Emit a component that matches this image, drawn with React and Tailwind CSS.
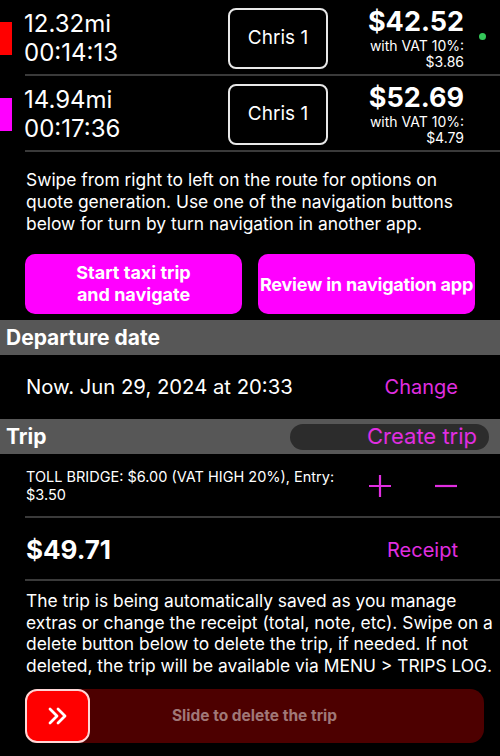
import React from 'react';

const routes = [
  { color: 'bg-[#ff0000]', dist: '12.32mi', time: '00:14:13', driver: 'Chris 1', price: '$42.52', vat: '$3.86', active: true },
  { color: 'bg-[#ff00ff]', dist: '14.94mi', time: '00:17:36', driver: 'Chris 1', price: '$52.69', vat: '$4.79', active: false },
];

function RouteRow({ route }) {
  return (
    <div className="relative flex h-[76px] items-center">
      <div className={`w-3 h-[33px] ${route.color}`} />
      <div className="ml-3 flex flex-col text-[24px] leading-[29px] text-white">
        <span>{route.dist}</span>
        <span>{route.time}</span>
      </div>
      <button className="ml-auto mr-0 w-[100px] h-[61px] rounded-lg border-2 border-[#e8e8e8] text-[19px] text-white">
        {route.driver}
      </button>
      <div className="w-[136px] flex flex-col items-end text-white">
        <span className="text-[27px] font-bold leading-[32px]">{route.price}</span>
        <span className="text-[14px] leading-[16px]">with VAT 10%:</span>
        <span className="text-[14px] leading-[16px]">{route.vat}</span>
      </div>
      <div className="w-9 flex justify-center">
        {route.active && <div className="w-[7px] h-[7px] rounded-full bg-[#34c759] -mt-1" />}
      </div>
      <div className="absolute bottom-0 left-[25px] right-0 h-[2px] bg-[#3a3a3a]" />
    </div>
  );
}

function App() {
  return (
    <div className="w-[500px] h-[756px] overflow-hidden bg-black text-white" style={{ fontFamily: 'Inter, "Liberation Sans", sans-serif' }}>
      {routes.map((r, i) => (
        <RouteRow key={i} route={r} />
      ))}

      <p className="pl-[26px] pr-[26px] pt-[17px] text-[17.4px] leading-[22px]">
        Swipe from right to left on the route for options on quote generation. Use one of the navigation buttons below for turn by turn navigation in another app.
      </p>

      <div className="flex gap-4 px-[25px] pt-[19px]">
        <button className="flex-1 h-[60px] rounded-[10px] bg-[#ff00ff] text-[18px] font-bold leading-[22px] text-white">
          Start taxi trip<br />and navigate
        </button>
        <button className="flex-1 h-[60px] rounded-[10px] bg-[#ff00ff] text-[18px] font-bold tracking-[-0.2px] text-white whitespace-nowrap">
          Review in navigation app
        </button>
      </div>

      <div className="mt-[6px] h-[35px] flex items-center bg-[#575757] px-[6px]">
        <span className="text-[21px] font-bold">Departure date</span>
      </div>

      <div className="h-[64px] flex items-center px-[26px]">
        <span className="text-[20.3px]">Now. Jun 29, 2024 at 20:33</span>
        <span className="ml-auto mr-[16px] text-[20px] text-[#e02ee0]">Change</span>
      </div>

      <div className="h-[35px] flex items-center bg-[#575757] pl-[6px] pr-[11px]">
        <span className="text-[21px] font-bold">Trip</span>
        <div className="ml-auto w-[199px] h-[26px] rounded-full bg-[#2c2c2c] flex items-center justify-end pr-3">
          <span className="text-[22px] text-[#e02ee0]">Create trip</span>
        </div>
      </div>

      <div className="relative h-[64px] flex items-center pl-[26px]">
        <span className="w-[325px] text-[14.5px] leading-[18px]">
          TOLL BRIDGE: $6.00 (VAT HIGH 20%), Entry: $3.50
        </span>
        <div className="ml-[17px] flex items-center gap-[42px]">
          <svg width="24" height="24" viewBox="0 0 24 24">
            <path d="M12 1v22M1 12h22" stroke="#e02ee0" strokeWidth="2.2" />
          </svg>
          <svg width="24" height="24" viewBox="0 0 24 24">
            <path d="M1 12h22" stroke="#e02ee0" strokeWidth="2.2" />
          </svg>
        </div>
        <div className="absolute bottom-0 left-[25px] right-0 h-[2px] bg-[#3a3a3a]" />
      </div>

      <div className="relative h-[63px] flex items-center pl-[26px]">
        <span className="text-[26px] font-bold">$49.71</span>
        <span className="ml-auto mr-[42px] text-[20px] text-[#e02ee0]">Receipt</span>
        <div className="absolute bottom-0 left-[25px] right-0 h-[2px] bg-[#3a3a3a]" />
      </div>

      <p className="pl-[26px] pr-[4px] pt-[9px] text-[17.4px] leading-[21.7px]">
        The trip is being automatically saved as you manage extras or change the receipt (total, note, etc). Swipe on a delete button below to delete the trip, if needed. If not deleted, the trip will be available via MENU &gt; TRIPS LOG.
      </p>

      <div className="relative ml-[25px] mr-[16px] mt-[12px] h-[54px] rounded-[14px] bg-[#4d0000] flex items-center justify-center">
        <div className="absolute left-0 top-0 w-[65px] h-[54px] rounded-[12px] bg-[#ff0000] border-2 border-[#ffd6d6] flex items-center justify-center">
          <svg width="22" height="18" viewBox="0 0 22 18">
            <path d="M3 2l7 7-7 7M11 2l7 7-7 7" fill="none" stroke="white" strokeWidth="2.8" strokeLinecap="round" strokeLinejoin="round" />
          </svg>
        </div>
        <span className="text-[15.5px] font-bold text-[#a07878]">Slide to delete the trip</span>
      </div>
    </div>
  );
}

export default App;
